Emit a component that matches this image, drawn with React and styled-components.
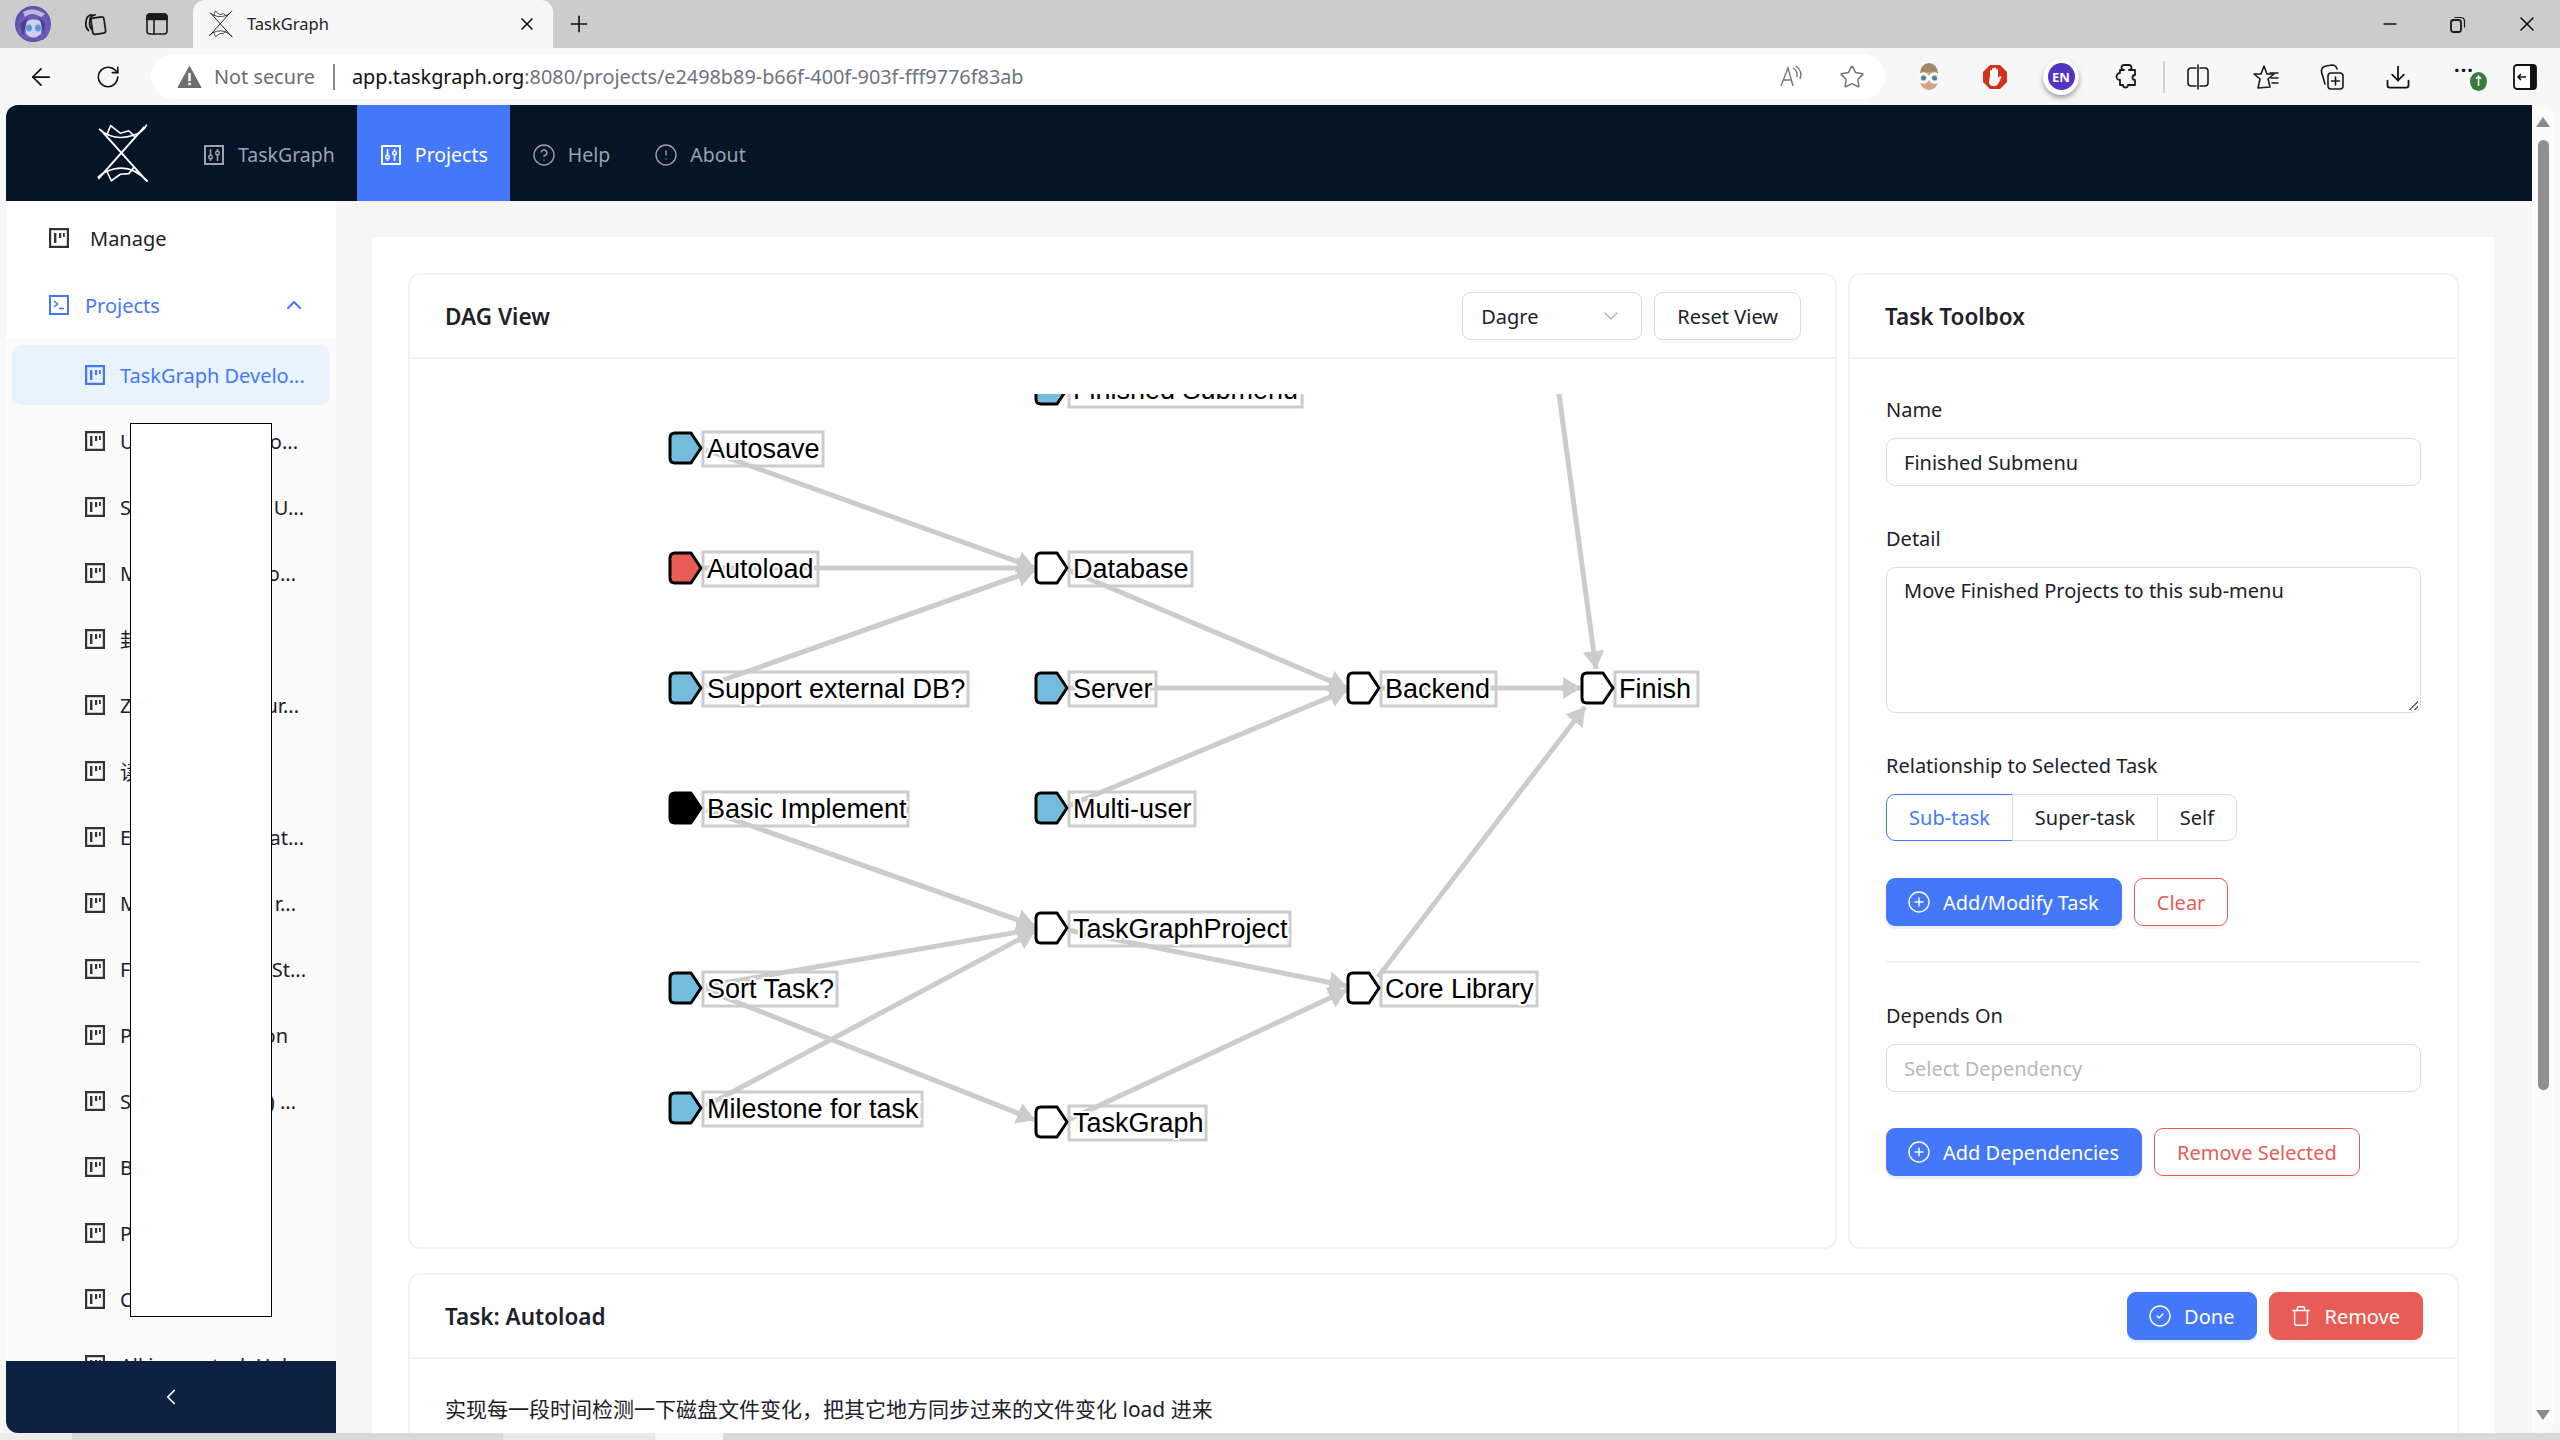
import React from 'react';
import styled, { createGlobalStyle } from 'styled-components';
import {
  ArrowLeft, RotateCw, Plus, X, Minus, Star, Download, CirclePlus, CircleCheck,
  CircleHelp, CircleAlert, ChevronUp, ChevronDown, ChevronLeft, Trash,
} from 'lucide-react';

const GlobalStyle = createGlobalStyle`
  html, body { margin: 0; padding: 0; background: #f7f7f7; overflow: hidden; }
  * { box-sizing: border-box; }
  body { font-family: "Noto Sans", "Noto Sans CJK SC", sans-serif; color: #1d2129; }
`;

const BLUE = '#4478fa';
const RED = '#e85c55';

/* ---------- icons ---------- */

const Logo = ({ size = 52, color = '#fff' }) => (
  <svg width={size} height={size * 1.16} viewBox="78 52 160 182" fill="none" stroke={color} strokeLinejoin="round">
    <path d="M90 72 L232 230" strokeWidth="6" />
    <path d="M224 62 L82 222" strokeWidth="6" />
    <path d="M84 68 Q130 108 190 88 Q220 78 231 55" strokeWidth="5" />
    <path d="M108 88 L120 58 L150 82 L176 74 L194 92" strokeWidth="5" />
    <path d="M80 218 Q98 200 130 192 Q185 178 234 230" strokeWidth="5" />
    <path d="M108 198 L122 228 L150 208 L176 206 L192 186" strokeWidth="5" />
  </svg>
);

const SliderBox = ({ color = 'currentColor', knob = '#051427' }) => (
  <svg width="20" height="20" viewBox="0 0 20 20" fill="none" stroke={color}>
    <rect x="1" y="1" width="18" height="18" strokeWidth="2" />
    <path d="M6.5 4v12M13.5 4v12" strokeWidth="1.6" />
    <circle cx="6.5" cy="12" r="1.8" fill={knob} strokeWidth="1.4" />
    <circle cx="13.5" cy="8" r="1.8" fill={knob} strokeWidth="1.4" />
  </svg>
);

const Kanban = ({ color = '#333' }) => (
  <svg width="20" height="20" viewBox="0 0 20 20" fill={color}>
    <path d="M0 0h20v20H0z M2.2 2.2v15.6h15.6V2.2z" fillRule="evenodd" />
    <rect x="5" y="5" width="2.4" height="10" />
    <rect x="10" y="5" width="2.2" height="5" />
    <rect x="14" y="5" width="1.8" height="4" />
  </svg>
);

const TerminalBox = ({ color = BLUE }) => (
  <svg width="20" height="20" viewBox="0 0 20 20" fill="none" stroke={color} strokeWidth="2">
    <rect x="1" y="1" width="18" height="18" />
    <path d="M5 6l3.5 3L5 12" strokeWidth="1.6" />
    <path d="M10 13.5h5" strokeWidth="1.6" />
  </svg>
);

const Avatar = () => (
  <svg width="36" height="36" viewBox="0 0 36 36">
    <circle cx="18" cy="18" r="18" fill="#5f52a8" />
    <path d="M3 16 Q8 2 20 2 Q32 3 34 16 Q36 30 28 34 L8 33 Q1 26 3 16z" fill="#6a5ab5" />
    <path d="M8 6 Q18 0 30 8 L26 11 Q16 5 10 11z" fill="#bdb8e0" />
    <path d="M10 17 Q18 10 27 16 L26 28 Q18 35 11 28z" fill="#c9d3ee" />
    <ellipse cx="14" cy="22" rx="3" ry="3.4" fill="#5c9ad6" />
    <ellipse cx="23" cy="22" rx="3" ry="3.4" fill="#5c9ad6" />
    <path d="M5 18 Q10 14 13 11 L8 30z M30 18 Q27 14 24 11 L29 28z" fill="#4a3f92" />
  </svg>
);

const Glyph = ({ w = 24, h = 24, box = '0 0 24 24', children }) => (
  <svg width={w} height={h} viewBox={box} fill="none" stroke="#1a1a1a" strokeWidth="1.6" strokeLinecap="round" strokeLinejoin="round">
    {children}
  </svg>
);

const TabsIcon = () => (
  <Glyph w={26} h={26}>
    <rect x="9" y="6" width="12" height="15" rx="2" transform="rotate(-8 15 13)" />
    <path d="M6 18 Q3.5 16 3.5 12 L4 8 Q5 4 9 3.5" />
    <path d="M9 17 Q6.8 15 7 11 L7.5 7 Q8.5 4 12 3.5" />
  </Glyph>
);

const SideTabIcon = () => (
  <Glyph w={24} h={24}>
    <rect x="2" y="2" width="20" height="20" rx="3" />
    <path d="M2 7.5h20V5a3 3 0 0 0-3-3H5a3 3 0 0 0-3 3z" fill="#1a1a1a" />
    <path d="M9 7.5V22" />
  </Glyph>
);

const RestoreIcon = () => (
  <Glyph w={16} h={18} box="0 0 16 18">
    <rect x="1" y="5" width="10" height="12" rx="2.5" strokeWidth="1.8" />
    <path d="M5 2.5h6a3.5 3.5 0 0 1 3.5 3.5v6" strokeWidth="1.2" />
  </Glyph>
);

const WarnIcon = () => (
  <svg width="25" height="24" viewBox="0 0 25 24">
    <path d="M12.5 1.5 L24 22.5 H1z" fill="#6d6d6d" stroke="#6d6d6d" strokeLinejoin="round" />
    <rect x="11.2" y="8" width="2.6" height="8" fill="#fff" />
    <rect x="11.2" y="17.6" width="2.6" height="2.6" fill="#fff" />
  </svg>
);

const ReadAloud = () => (
  <svg width="26" height="24" viewBox="0 0 26 24" fill="none" stroke="#777" strokeWidth="1.4">
    <path d="M2 21 L9 3 L14 21 M4.5 15 H12" />
    <path d="M14 3 Q19 6 18 12 M17 1 Q24 6 21 14" />
  </svg>
);

const ExtFace = () => (
  <svg width="24" height="28" viewBox="0 0 24 28">
    <ellipse cx="12" cy="10" rx="9" ry="10" fill="#a58a66" />
    <ellipse cx="12" cy="18" rx="9" ry="9" fill="#d9a283" />
    <circle cx="6.5" cy="15" r="5" fill="#dff0f4" stroke="#fff" strokeWidth="1.4" />
    <circle cx="17.5" cy="15" r="5" fill="#dff0f4" stroke="#fff" strokeWidth="1.4" />
    <circle cx="6.5" cy="15" r="2.5" fill="#5a7f88" />
    <circle cx="17.5" cy="15" r="2.5" fill="#5a7f88" />
  </svg>
);

const StopIcon = () => (
  <svg width="26" height="26" viewBox="0 0 26 26">
    <path d="M8 1h10l7 7v10l-7 7H8l-7-7V8z" fill="#d4301e" />
    <path d="M8 11 V7 a1 1 0 0 1 2 0 V5 a1 1 0 0 1 2 0 V4.5 a1 1 0 0 1 2 0 V6 a1 1 0 0 1 2 0 V14 l2 -2 q2 0 1 2 l-3 6 q-1 2 -4 2 h-1 q-3 0 -4 -3z" fill="#fff" />
  </svg>
);

const PuzzleIcon = () => (
  <Glyph w={24} h={28} box="0 0 24 28">
    <path d="M9 2 h5 a2.5 2.5 0 0 1 0 5 h6 v5 a2.5 2.5 0 0 0 0 5 v5 h-7 a2.5 2.5 0 0 1-5 0 H5 v-5 a3 3 0 0 1 0-7 V7 h4 a2.5 2.5 0 0 1 0-5z" strokeWidth="1.8" />
  </Glyph>
);

const SplitIcon = () => (
  <Glyph w={24} h={28} box="0 0 24 28">
    <path d="M10 5 H5 a3 3 0 0 0-3 3 v12 a3 3 0 0 0 3 3 h5 M14 5 h5 a3 3 0 0 1 3 3 v12 a3 3 0 0 1-3 3 h-5" />
    <path d="M12 2v24" />
  </Glyph>
);

const FavIcon = () => (
  <Glyph w={26} h={28} box="0 0 26 28">
    <path d="M11 3 L14 11 H21 L15 16 L17 24 L5 25 L7 16 L1 11 H8z" />
    <path d="M17 10h8M18 15h7M19 20h6" />
  </Glyph>
);

const CollectIcon = () => (
  <Glyph w={26} h={30} box="0 0 26 30">
    <rect x="9" y="11" width="15" height="16" rx="3" />
    <path d="M16.5 15v8M12.5 19h8" />
    <path d="M6 22 L2.5 10 Q2 5 7 4 L13 3 Q17 3 18 7" />
  </Glyph>
);

const DrawerIcon = () => (
  <svg width="24" height="26" viewBox="0 0 24 26">
    <rect x="1" y="1" width="22" height="24" rx="3" fill="#fff" stroke="#111" strokeWidth="1.8" />
    <path d="M17 1h3a3 3 0 0 1 3 3v18a3 3 0 0 1-3 3h-3z" fill="#111" />
    <path d="M13 13H5M8 10l-3 3 3 3" fill="none" stroke="#111" strokeWidth="1.6" />
  </svg>
);

/* ---------- browser chrome ---------- */

const Page = styled.div`
  width: 2560px;
  height: 1440px;
  display: flex;
  flex-direction: column;
  overflow: hidden;
`;

const TabStrip = styled.div`
  height: 48px;
  background: #cccccc;
  display: flex;
  align-items: center;
  flex: none;
`;

const StripSlot = styled.div`
  width: ${(p) => p.$w || 62}px;
  margin-left: ${(p) => p.$ml || 0}px;
  height: 48px;
  display: flex;
  align-items: center;
  justify-content: center;
  flex: none;
`;

const BrowserTab = styled.div`
  width: 360px;
  height: 48px;
  margin-left: 5px;
  padding: 0 16px 0 16px;
  background: #f7f7f7;
  border-radius: 12px 12px 0 0;
  display: flex;
  align-items: center;
  gap: 14px;
  flex: none;
`;

const TabTitle = styled.span`
  flex: 1;
  font-size: 16.5px;
  margin-top: -2px;
  color: #222;
`;

const Toolbar = styled.div`
  height: 57px;
  display: flex;
  align-items: center;
  flex: none;
  background: #f7f7f7;
`;

const ToolSlot = styled.div`
  width: ${(p) => p.$w || 66}px;
  margin-left: ${(p) => p.$ml || 0}px;
  height: 46px;
  display: flex;
  align-items: center;
  justify-content: center;
  position: relative;
  flex: none;
`;

const AddressBar = styled.div`
  width: 1734px;
  height: 45px;
  margin-left: 10px;
  padding: 0 14px 0 26px;
  background: #fff;
  border-radius: 23px;
  display: flex;
  align-items: center;
  font-size: 19.85px;
  flex: none;
`;

const NotSecure = styled.span`
  color: #6d6d6d;
  margin-left: 12px;
`;

const UrlDivider = styled.span`
  width: 2px;
  height: 26px;
  background: #8a8a8a;
  margin: 0 17px 0 18px;
`;

const UrlHost = styled.span`
  color: #111;
`;

const UrlPath = styled.span`
  color: #6c7480;
`;

const AddressTools = styled.div`
  margin-left: auto;
  display: flex;
  align-items: center;
  gap: 34px;
  padding-right: 6px;
`;

const ToolSeparator = styled.span`
  width: 2px;
  height: 32px;
  background: #d2d2d2;
  margin-left: 3px;
  flex: none;
`;

const EnBadge = styled.span`
  width: 36px;
  height: 36px;
  border-radius: 50%;
  background: #fff;
  box-shadow: 0 3px 5px rgba(0, 0, 0, 0.35);
  display: flex;
  align-items: center;
  justify-content: center;
`;

const EnInner = styled.span`
  width: 27px;
  height: 27px;
  border-radius: 50%;
  background: #5534c4;
  color: #fff;
  font-size: 13px;
  font-weight: 700;
  display: flex;
  align-items: center;
  justify-content: center;
`;

const MoreDots = styled.span`
  font-size: 20px;
  font-weight: 700;
  letter-spacing: 1px;
  color: #111;
  line-height: 1;
  margin-top: -14px;
`;

const UpdateBadge = styled.span`
  position: absolute;
  right: 10px;
  top: 18px;
  width: 17px;
  height: 19px;
  border-radius: 50%;
  background: #3a7a3a;
  color: #fff;
  font-size: 12px;
  font-weight: 700;
  line-height: 19px;
  text-align: center;
`;

const Frame = styled.div`
  flex: 1;
  display: flex;
  padding-left: 6px;
  min-height: 0;
`;

const AppArea = styled.div`
  width: 2526px;
  display: flex;
  flex-direction: column;
  border-radius: 12px 0 0 12px;
  overflow: hidden;
  flex: none;
`;

const ScrollBar = styled.div`
  width: 22px;
  background: #fbfbfb;
  border-radius: 0 10px 10px 0;
  display: flex;
  flex-direction: column;
  align-items: center;
  padding-top: 12px;
  flex: none;
`;

const ScrollUp = styled.span`
  width: 0;
  height: 0;
  border-left: 7px solid transparent;
  border-right: 7px solid transparent;
  border-bottom: 10px solid #8a8a8a;
`;

const ScrollDown = styled(ScrollUp)`
  border-bottom: 0;
  border-top: 10px solid #8a8a8a;
  margin-top: auto;
  margin-bottom: 13px;
`;

const ScrollThumb = styled.span`
  width: 11px;
  height: 950px;
  margin-top: 13px;
  border-radius: 6px;
  background: #8f8f8f;
`;

const BottomEdge = styled.div`
  height: 7px;
  display: flex;
  flex: none;
  background: #d9d9d9;
`;

const EdgePiece = styled.span`
  width: ${(p) => p.$w}px;
  background: ${(p) => p.$c};
`;

/* ---------- app header ---------- */

const AppHeader = styled.header`
  height: 96px;
  background: #051427;
  display: flex;
  flex: none;
`;

const LogoCell = styled.div`
  width: 174px;
  padding-left: 91px;
  display: flex;
  align-items: center;
`;

const NavItem = styled.div`
  height: 96px;
  padding: 3px 22px 0 24px;
  display: flex;
  align-items: center;
  gap: 14px;
  font-size: 19.5px;
  color: ${(p) => (p.$active ? '#fff' : '#9aa3ae')};
  background: ${(p) => (p.$active ? BLUE : 'transparent')};
`;

const NavGlyph = styled.span`
  display: flex;
  margin: 0 -2px;
`;

/* ---------- sidebar ---------- */

const Body = styled.div`
  flex: 1;
  display: flex;
  min-height: 0;
`;

const Sidebar = styled.aside`
  width: 330px;
  background: #fff;
  display: flex;
  flex-direction: column;
  flex: none;
  overflow: hidden;
`;

const MenuScroll = styled.div`
  flex: 1;
  min-height: 0;
  overflow: hidden;
  padding-top: 7px;
  position: relative;
`;

const MenuRow = styled.div`
  height: 60px;
  margin-bottom: 7px;
  padding: 0 30px 0 43px;
  display: flex;
  align-items: center;
  gap: ${(p) => p.$gap || 18}px;
  font-size: 20px;
  color: ${(p) => (p.$active ? BLUE : '#1d2129')};
`;

const RowChevron = styled.span`
  margin-left: auto;
  display: flex;
`;

const SubMenu = styled.div`
  background: #fafafa;
  padding: 6px 6px 0;
  margin-top: -3px;
  display: flex;
  flex-direction: column;
  gap: 6px;
`;

const SubRow = styled.div`
  height: 60px;
  padding-left: 73px;
  border-radius: 10px;
  background: ${(p) => (p.$active ? '#e8f3ff' : 'transparent')};
  color: ${(p) => (p.$active ? BLUE : '#1d2129')};
  display: flex;
  align-items: center;
  gap: 15px;
  font-size: 20px;
  white-space: nowrap;
  flex: none;
`;

const SubLabel = styled.span`
  width: ${(p) => p.$w || 177}px;
  display: flex;
  justify-content: space-between;
  overflow: hidden;
`;

const MaskBox = styled.div`
  position: absolute;
  left: 124px;
  top: 222px;
  width: 142px;
  height: 894px;
  background: #fff;
  border: 1.5px solid #000;
`;

const CollapseBar = styled.div`
  height: 72px;
  background: #0d2240;
  color: #fff;
  display: flex;
  align-items: center;
  justify-content: center;
  flex: none;
`;

/* ---------- main ---------- */

const Main = styled.main`
  flex: 1;
  background: #f5f5f5;
  padding: 36px 37px 0 36px;
  min-width: 0;
  overflow: hidden;
`;

const Panel = styled.div`
  height: 100%;
  background: #fff;
  padding: 36px 36px 0;
  overflow: hidden;
`;

const TopGrid = styled.div`
  display: grid;
  grid-template-columns: 1429px 611px;
  column-gap: 11px;
  height: 976px;
  margin-bottom: 24px;
`;

const Card = styled.section`
  border: 2px solid #f1f2f4;
  border-radius: 12px;
  background: #fff;
  overflow: hidden;
  display: flex;
  flex-direction: column;
  min-height: ${(p) => p.$minH || 0}px;
`;

const CardHead = styled.div`
  height: 84px;
  padding: 0 34px 0 35px;
  border-bottom: 2px solid #f1f2f4;
  display: flex;
  align-items: center;
  justify-content: space-between;
  flex: none;
`;

const CardTitle = styled.h2`
  margin: 0;
  font-size: 22.5px;
  font-weight: 600;
  color: #1d2129;
`;

const HeadActions = styled.div`
  display: flex;
  align-items: center;
  gap: 12px;
`;

const SelectBox = styled.div`
  width: 180px;
  height: 48px;
  padding: 0 18px;
  border: 1.5px solid #dcdcdc;
  border-radius: 9px;
  display: flex;
  align-items: center;
  justify-content: space-between;
  font-size: 20px;
`;

const Btn = styled.button`
  height: 48px;
  padding: ${(p) => (p.$icon ? '0 22px 0 20px' : '0 22px')};
  border-radius: 9px;
  border: 1.5px solid ${(p) => (p.$tone === 'primary' ? BLUE : p.$tone === 'fill-red' || p.$tone === 'danger' ? RED : '#dcdcdc')};
  background: ${(p) => (p.$tone === 'primary' ? BLUE : p.$tone === 'fill-red' ? RED : '#fff')};
  color: ${(p) => (p.$tone === 'primary' || p.$tone === 'fill-red' ? '#fff' : p.$tone === 'danger' ? RED : '#1d2129')};
  box-shadow: 0 3px 0 ${(p) => (p.$tone === 'primary' ? 'rgba(68,120,250,0.1)' : 'rgba(0,0,0,0.03)')};
  display: inline-flex;
  align-items: center;
  gap: 12px;
  font: inherit;
  font-size: 20px;
  white-space: nowrap;
`;

const GraphBody = styled.div`
  padding-top: 35px;
  flex: 1;
  min-height: 0;
  overflow: hidden;
`;

const FormBody = styled.div`
  padding: 35px 36px 0 36px;
  display: flex;
  flex-direction: column;
`;

const Field = styled.div`
  margin-bottom: ${(p) => p.$mb || 37}px;
`;

const FieldLabel = styled.div`
  height: 32px;
  margin-bottom: 12px;
  font-size: 20px;
  line-height: 32px;
`;

const TextBox = styled.div`
  height: 48px;
  padding: 0 17px;
  border: 1.5px solid #dcdcdc;
  border-radius: 9px;
  display: flex;
  align-items: center;
  font-size: 20px;
  color: ${(p) => (p.$placeholder ? '#b5b8bf' : '#1d2129')};
`;

const AreaBox = styled.div`
  height: 146px;
  padding: 7px 17px;
  border: 1.5px solid #dcdcdc;
  border-radius: 9px;
  font-size: 20px;
  line-height: 32px;
  position: relative;
  &::after {
    content: '';
    position: absolute;
    right: 2px;
    bottom: 2px;
    width: 10px;
    height: 10px;
    background: linear-gradient(135deg, transparent 50%, #666 50%, #666 60%, transparent 60%, transparent 75%, #666 75%, #666 85%, transparent 85%);
  }
`;

const Segments = styled.div`
  display: inline-flex;
  height: 47px;
`;

const Segment = styled.div`
  width: ${(p) => p.$w}px;
  height: 47px;
  border: 1.5px solid ${(p) => (p.$active ? BLUE : '#dcdcdc')};
  margin-left: ${(p) => (p.$first ? 0 : -1)}px;
  border-radius: ${(p) => (p.$first ? '9px 0 0 9px' : p.$last ? '0 9px 9px 0' : '0')};
  color: ${(p) => (p.$active ? BLUE : '#1d2129')};
  display: flex;
  align-items: center;
  justify-content: center;
  font-size: 20px;
`;

const ButtonRow = styled.div`
  display: flex;
  gap: 12px;
`;

const FormDivider = styled.div`
  height: 2px;
  background: #f1f2f4;
  margin-bottom: 37px;
`;

const TaskBody = styled.div`
  padding: 34px 35px;
  font-size: 21px;
  line-height: 32px;
`;

/* ---------- graph data ---------- */

const COL = [670, 1036, 1348, 1582];

const NODES = [
  { t: 'Finished Submenu', x: COL[1], y: 390, w: 233, f: '#74bcdd' },
  { t: 'Autosave', x: COL[0], y: 449, w: 120, f: '#74bcdd' },
  { t: 'Autoload', x: COL[0], y: 569, w: 115, f: '#e85c55' },
  { t: 'Support external DB?', x: COL[0], y: 689, w: 265, f: '#74bcdd' },
  { t: 'Basic Implement', x: COL[0], y: 809, w: 205, f: '#000' },
  { t: 'Sort Task?', x: COL[0], y: 989, w: 134, f: '#74bcdd' },
  { t: 'Milestone for task', x: COL[0], y: 1109, w: 219, f: '#74bcdd' },
  { t: 'Database', x: COL[1], y: 569, w: 123, f: '#fff' },
  { t: 'Server', x: COL[1], y: 689, w: 87, f: '#74bcdd' },
  { t: 'Multi-user', x: COL[1], y: 809, w: 126, f: '#74bcdd' },
  { t: 'TaskGraphProject', x: COL[1], y: 929, w: 221, f: '#fff' },
  { t: 'TaskGraph', x: COL[1], y: 1123, w: 137, f: '#fff' },
  { t: 'Backend', x: COL[2], y: 689, w: 115, f: '#fff' },
  { t: 'Core Library', x: COL[2], y: 989, w: 156, f: '#fff' },
  { t: 'Finish', x: COL[3], y: 689, w: 83, f: '#fff' },
];

const EDGES = [
  [1557, 380, 1596, 670],
  [706, 451, 1035, 569],
  [702, 569, 1035, 569],
  [706, 687, 1035, 571],
  [1068, 571, 1347, 689],
  [1068, 689, 1347, 689],
  [1068, 807, 1347, 691],
  [1380, 689, 1581, 689],
  [706, 811, 1035, 927],
  [706, 987, 1035, 930],
  [706, 1107, 1035, 932],
  [706, 991, 1035, 1121],
  [1068, 931, 1347, 987],
  [1068, 1121, 1347, 991],
  [1378, 978, 1585, 708],
];

const shape = (x, y) =>
  `M${x + 5} ${y - 15} H${x + 21} L${x + 31} ${y} L${x + 21} ${y + 15} H${x + 5} Q${x} ${y + 15} ${x} ${y + 10} V${y - 10} Q${x} ${y - 15} ${x + 5} ${y - 15}Z`;

const Graph = () => (
  <svg width="1425" height="850" viewBox="410 395 1425 850">
    <defs>
      <marker id="head" markerUnits="userSpaceOnUse" markerWidth="18" markerHeight="22" refX="18" refY="11" orient="auto">
        <path d="M0 0 L18 11 L0 22z" fill="#cccccc" />
      </marker>
    </defs>
    {NODES.map((n) => (
      <rect key={n.t} x={n.x + 33} y={n.y - 16} width={n.w} height={34} fill="#fff" stroke="#cccccc" strokeWidth="3" />
    ))}
    {EDGES.map((e, i) => (
      <line key={i} x1={e[0]} y1={e[1]} x2={e[2]} y2={e[3]} stroke="#cccccc" strokeWidth="5" markerEnd="url(#head)" />
    ))}
    {NODES.map((n) => (
      <g key={n.t}>
        <path d={shape(n.x, n.y)} fill={n.f} stroke="#000" strokeWidth="3" strokeLinejoin="round" />
        <text
          x={n.x + 37}
          y={n.y + 10}
          fontFamily="Liberation Sans, Arial, sans-serif"
          fontSize="27"
          fill="#000"
          stroke="#fff"
          strokeWidth="4"
          paintOrder="stroke"
        >
          {n.t}
        </text>
      </g>
    ))}
  </svg>
);

/* ---------- sidebar data ---------- */

const PROJECTS = [
  ['U', 'o...', 178], ['S', 'U...', 184], ['M', 'o...', 176], ['封', ''], ['Z', 'ur...', 179], ['读', ''],
  ['E', 'at...', 184], ['M', 'r...', 176], ['F', 'St...', 186], ['P', 'on', 168], ['S', ') ...', 176], ['B', ''], ['P', ''], ['C', ''],
];

export default function App() {
  return (
    <Page>
      <GlobalStyle />

      <TabStrip>
        <StripSlot $ml={2} $w={62}><Avatar /></StripSlot>
        <StripSlot><TabsIcon /></StripSlot>
        <StripSlot><SideTabIcon /></StripSlot>
        <BrowserTab>
          <Logo size={24} color="#111" />
          <TabTitle>TaskGraph</TabTitle>
          <X size={20} color="#111" />
        </BrowserTab>
        <StripSlot $w={52}><Plus size={26} strokeWidth={1.5} color="#111" /></StripSlot>
        <StripSlot $ml={1751} $w={68}><Minus size={20} strokeWidth={2} color="#111" /></StripSlot>
        <StripSlot $w={68}><RestoreIcon /></StripSlot>
        <StripSlot $w={70}><X size={24} strokeWidth={1.6} color="#111" /></StripSlot>
      </TabStrip>

      <Toolbar>
        <ToolSlot $ml={8}><ArrowLeft size={28} strokeWidth={1.5} color="#111" /></ToolSlot>
        <ToolSlot $ml={1}><RotateCw size={26} strokeWidth={1.5} color="#111" /></ToolSlot>
        <AddressBar>
          <WarnIcon />
          <NotSecure>Not secure</NotSecure>
          <UrlDivider />
          <UrlHost>app.taskgraph.org</UrlHost>
          <UrlPath>:8080/projects/e2498b89-b66f-400f-903f-fff9776f83ab</UrlPath>
          <AddressTools>
            <ReadAloud />
            <Star size={26} strokeWidth={1.4} color="#777" />
          </AddressTools>
        </AddressBar>
        <ToolSlot $ml={11}><ExtFace /></ToolSlot>
        <ToolSlot><StopIcon /></ToolSlot>
        <ToolSlot><EnBadge><EnInner>EN</EnInner></EnBadge></ToolSlot>
        <ToolSlot><PuzzleIcon /></ToolSlot>
        <ToolSeparator />
        <ToolSlot><SplitIcon /></ToolSlot>
        <ToolSlot $ml={2}><FavIcon /></ToolSlot>
        <ToolSlot><CollectIcon /></ToolSlot>
        <ToolSlot><Download size={28} strokeWidth={1.5} color="#111" /></ToolSlot>
        <ToolSlot>
          <MoreDots>···</MoreDots>
          <UpdateBadge>↑</UpdateBadge>
        </ToolSlot>
        <ToolSlot $w={56}><DrawerIcon /></ToolSlot>
      </Toolbar>

      <Frame>
        <AppArea>
          <AppHeader>
            <LogoCell><Logo /></LogoCell>
            <NavItem><SliderBox />TaskGraph</NavItem>
            <NavItem $active><SliderBox color="#fff" knob={BLUE} />Projects</NavItem>
            <NavItem><NavGlyph><CircleHelp size={24} strokeWidth={1.4} /></NavGlyph>Help</NavItem>
            <NavItem><NavGlyph><CircleAlert size={24} strokeWidth={1.4} /></NavGlyph>About</NavItem>
          </AppHeader>

          <Body>
            <Sidebar>
              <MenuScroll>
                <MenuRow $gap={21}><Kanban />Manage</MenuRow>
                <MenuRow $active $gap={16}>
                  <TerminalBox />
                  Projects
                  <RowChevron><ChevronUp size={24} strokeWidth={2} color={BLUE} /></RowChevron>
                </MenuRow>
                <SubMenu>
                  <SubRow $active>
                    <Kanban color={BLUE} />
                    <SubLabel $w={190}>TaskGraph Develo...</SubLabel>
                  </SubRow>
                  {PROJECTS.map(([head, tail, w], i) => (
                    <SubRow key={i}>
                      <Kanban />
                      <SubLabel $w={w}><span>{head}</span><span>{tail}</span></SubLabel>
                    </SubRow>
                  ))}
                  <SubRow>
                    <Kanban />
                    <SubLabel $w={190}>All in one task Help</SubLabel>
                  </SubRow>
                </SubMenu>
                <MaskBox />
              </MenuScroll>
              <CollapseBar><ChevronLeft size={26} strokeWidth={1.6} /></CollapseBar>
            </Sidebar>

            <Main>
              <Panel>
                <TopGrid>
                  <Card>
                    <CardHead>
                      <CardTitle>DAG View</CardTitle>
                      <HeadActions>
                        <SelectBox>Dagre<ChevronDown size={24} strokeWidth={1.3} color="#a9aeb8" /></SelectBox>
                        <Btn>Reset View</Btn>
                      </HeadActions>
                    </CardHead>
                    <GraphBody><Graph /></GraphBody>
                  </Card>

                  <Card>
                    <CardHead><CardTitle>Task Toolbox</CardTitle></CardHead>
                    <FormBody>
                      <Field>
                        <FieldLabel>Name</FieldLabel>
                        <TextBox>Finished Submenu</TextBox>
                      </Field>
                      <Field>
                        <FieldLabel>Detail</FieldLabel>
                        <AreaBox>Move Finished Projects to this sub-menu</AreaBox>
                      </Field>
                      <Field>
                        <FieldLabel>Relationship to Selected Task</FieldLabel>
                        <Segments>
                          <Segment $first $active $w={127}>Sub-task</Segment>
                          <Segment $w={146}>Super-task</Segment>
                          <Segment $last $w={80}>Self</Segment>
                        </Segments>
                      </Field>
                      <Field $mb={35}>
                        <ButtonRow>
                          <Btn $tone="primary" $icon><CirclePlus size={24} strokeWidth={1.4} />Add/Modify Task</Btn>
                          <Btn $tone="danger">Clear</Btn>
                        </ButtonRow>
                      </Field>
                      <FormDivider />
                      <Field $mb={36}>
                        <FieldLabel>Depends On</FieldLabel>
                        <TextBox $placeholder>Select Dependency</TextBox>
                      </Field>
                      <ButtonRow>
                        <Btn $tone="primary" $icon><CirclePlus size={24} strokeWidth={1.4} />Add Dependencies</Btn>
                        <Btn $tone="danger">Remove Selected</Btn>
                      </ButtonRow>
                    </FormBody>
                  </Card>
                </TopGrid>

                <Card $minH={300}>
                  <CardHead>
                    <CardTitle>Task: Autoload</CardTitle>
                    <HeadActions>
                      <Btn $tone="primary" $icon><CircleCheck size={24} strokeWidth={1.4} />Done</Btn>
                      <Btn $tone="fill-red" $icon><Trash size={22} strokeWidth={1.6} />Remove</Btn>
                    </HeadActions>
                  </CardHead>
                  <TaskBody>实现每一段时间检测一下磁盘文件变化，把其它地方同步过来的文件变化 load 进来</TaskBody>
                </Card>
              </Panel>
            </Main>
          </Body>
        </AppArea>

        <ScrollBar>
          <ScrollUp />
          <ScrollThumb />
          <ScrollDown />
        </ScrollBar>
      </Frame>

      <BottomEdge>
        <EdgePiece $w={72} $c="#ececec" />
        <EdgePiece $w={431} $c="#d9d9d9" />
        <EdgePiece $w={152} $c="#e8e8e8" />
        <EdgePiece $w={68} $c="#f7f7f7" />
      </BottomEdge>
    </Page>
  );
}
